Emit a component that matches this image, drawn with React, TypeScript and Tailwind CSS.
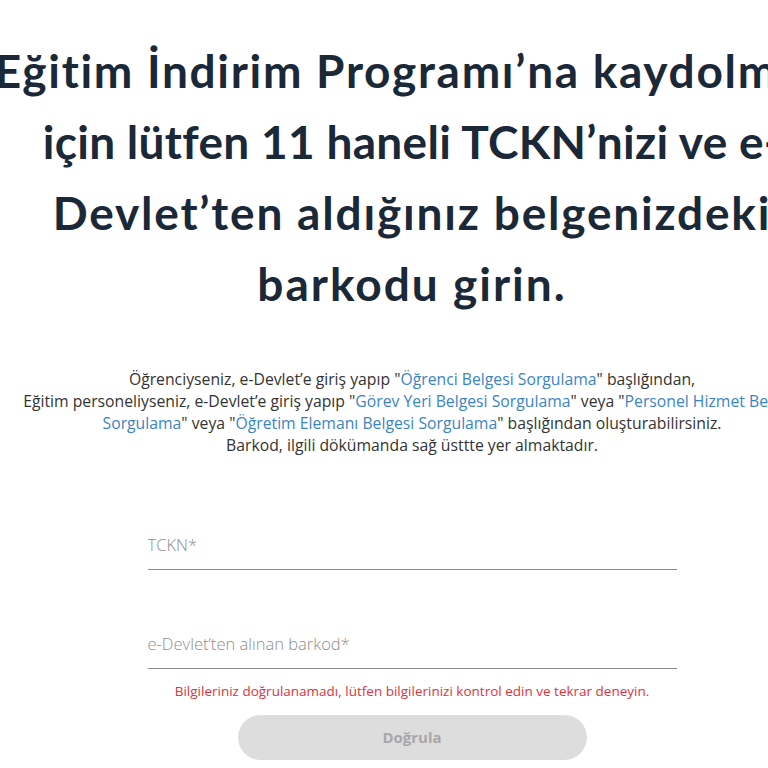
import React from "react";

const Link = ({ children }: { children: React.ReactNode }) => (
  <span className="text-[#3b84c4]">{children}</span>
);

export default function App() {
  return (
    <div className="w-full min-h-[768px] overflow-hidden bg-white">
      <div className="w-[824px] flex flex-col items-center">
        <h1
          className="w-[1004px] mx-[-90px] mt-[35px] flex flex-col items-center text-center text-[46px] leading-[71px] font-bold text-[#1a2838] whitespace-nowrap [font-variant-ligatures:none]"
          style={{ fontFamily: "Lato, 'Noto Sans', sans-serif" }}
        >
          <span className="tracking-[1.7px]">Eğitim İndirim Programı’na kaydolmak</span>
          <span className="tracking-[0.3px]">için lütfen 11 haneli TCKN’nizi ve e-</span>
          <span className="tracking-[1.8px]">Devlet’ten aldığınız belgenizdeki</span>
          <span className="tracking-[2px]">barkodu girin.</span>
        </h1>

        <p
          className="w-[1004px] mx-[-90px] mt-[49px] text-center text-[15.75px] leading-[22px] text-[#333333] whitespace-nowrap"
          style={{ fontFamily: "'Open Sans', 'Noto Sans', sans-serif" }}
        >
          Öğrenciyseniz, e-Devlet’e giriş yapıp "<Link>Öğrenci Belgesi Sorgulama</Link>" başlığından,
          <br />
          Eğitim personeliyseniz, e-Devlet’e giriş yapıp "<Link>Görev Yeri Belgesi Sorgulama</Link>" veya "
          <Link>Personel Hizmet Belgesi</Link>
          <br />
          <Link>Sorgulama</Link>" veya "<Link>Öğretim Elemanı Belgesi Sorgulama</Link>" başlığından oluşturabilirsiniz.
          <br />
          Barkod, ilgili dökümanda sağ üsttte yer almaktadır.
        </p>

        <form
          className="mt-[70px] w-[529px] flex flex-col"
          style={{ fontFamily: "'Open Sans', 'Noto Sans', sans-serif" }}
        >
          <div className="h-[44px] pb-[4px] flex items-center border-b border-[#8c8c8c]">
            <input
              className="w-full outline-none text-[16.5px] font-light text-[#333] placeholder:text-[#8e8e8e] bg-transparent"
              placeholder="TCKN*"
            />
          </div>
          <div className="mt-[55px] h-[44px] pb-[5px] flex items-center border-b border-[#8c8c8c]">
            <input
              className="w-full outline-none text-[16.5px] font-light text-[#333] placeholder:text-[#8e8e8e] bg-transparent"
              placeholder="e-Devlet’ten alınan barkod*"
            />
          </div>
          <p className="mt-[13px] text-center text-[13.5px] leading-[18px] text-[#e0323c] whitespace-nowrap">
            Bilgileriniz doğrulanamadı, lütfen bilgilerinizi kontrol edin ve tekrar deneyin.
          </p>
          <button
            type="button"
            disabled
            className="mt-[15px] self-center w-[349px] h-[45px] rounded-full bg-[#dddddd] text-[15px] font-bold text-[#a8a8a8]"
          >
            Doğrula
          </button>
        </form>
      </div>
    </div>
  );
}
